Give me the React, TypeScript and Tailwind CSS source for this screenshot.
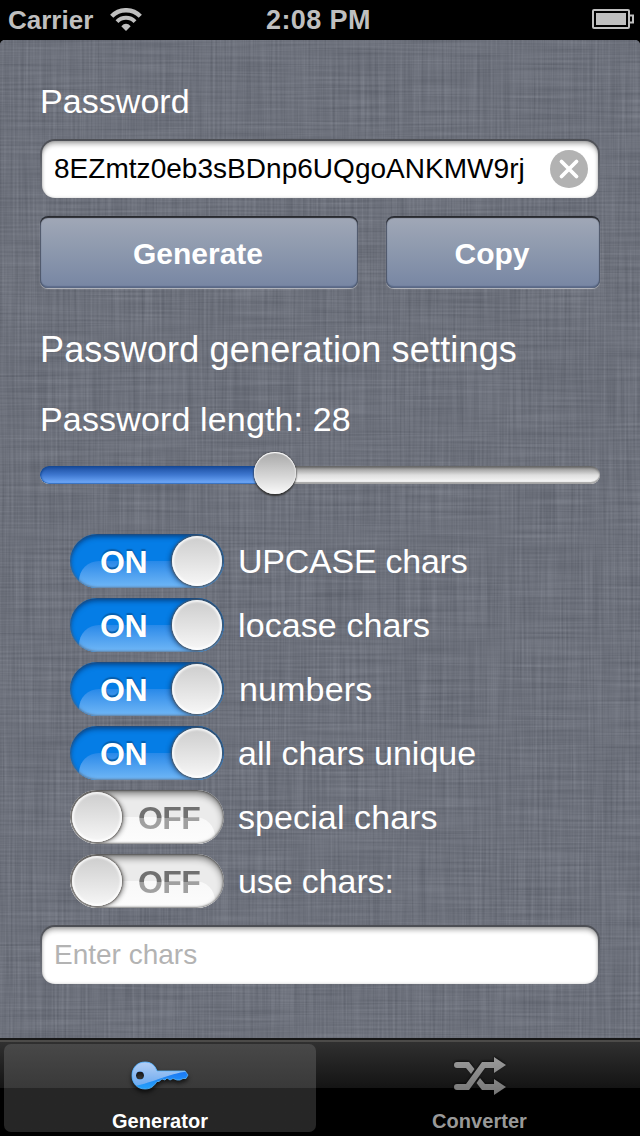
import React from "react";

function LinenTexture() {
  return (
    <svg className="absolute inset-0 h-full w-full" aria-hidden="true">
      <filter id="linen" x="0" y="0" width="100%" height="100%" colorInterpolationFilters="sRGB">
        <feTurbulence type="fractalNoise" baseFrequency="0.01 0.45" numOctaves="2" seed="4" />
        <feColorMatrix values="0 0 0 0.21 0.322  0 0 0 0.21 0.338  0 0 0 0.21 0.38  0 0 0 0 1" result="weft" />
        <feTurbulence type="fractalNoise" baseFrequency="0.45 0.01" numOctaves="2" seed="11" />
        <feColorMatrix values="0 0 0 0.21 0.322  0 0 0 0.21 0.338  0 0 0 0.21 0.38  0 0 0 0 1" result="warp" />
        <feComposite in="weft" in2="warp" operator="arithmetic" k2="0.5" k3="0.5" />
      </filter>
      <rect width="100%" height="100%" filter="url(#linen)" />
    </svg>
  );
}

function StatusBar() {
  return (
    <header className="grid h-10 shrink-0 grid-cols-3 items-center bg-black text-[26px] leading-10 font-bold text-[#bfbfbf]">
      <div className="flex items-center gap-[17px] pl-2">
        <span>Carrier</span>
        <svg width="32" height="24" viewBox="0 0 32 24" fill="none" stroke="#bfbfbf">
          <path d="M1.700 8.200A20 20 0 0 1 30.300 8.200" strokeWidth="4.4" />
          <path d="M7 13.700A12.500 12.500 0 0 1 25 13.700" strokeWidth="4" />
          <path d="M16 23L11.300 18.200Q16 13.500 20.700 18.200Z" fill="#bfbfbf" stroke="none" />
        </svg>
      </div>
      <div className="pr-[3px] text-center text-[27px] tracking-[0.4px] whitespace-nowrap">2:08 PM</div>
      <div className="flex justify-end pr-[6px] pb-[2px]">
        <svg width="42" height="20" viewBox="0 0 42 20" fill="none" stroke="#bfbfbf" strokeWidth="2">
          <rect x="1" y="1" width="36" height="18" rx="1" />
          <path d="M38 6.500h3v7h-3" />
          <rect x="4" y="4" width="30" height="12" fill="#bfbfbf" stroke="none" />
        </svg>
      </div>
    </header>
  );
}

function Field({ children }: { children: React.ReactNode }) {
  return (
    <div className="h-[60px] w-[560px] rounded-[15px] bg-linear-to-b from-[#4c4e54] via-[#686b73] to-[#6d717c]/0 p-[2px]">
      <div className="flex h-[57px] items-center justify-between rounded-[13px] bg-white pr-[10px] pb-px pl-[12px] shadow-[inset_0_4px_5px_-1px_rgba(0,0,0,0.32),inset_0_0_3px_rgba(0,0,0,0.22)]">
        {children}
      </div>
    </div>
  );
}

function ActionButton({ label, className }: { label: string; className: string }) {
  return (
    <button
      className={`${className} h-[72px] rounded-[8px] bg-linear-to-b from-[#a1a8b7] via-[#8c98ad] to-[#7786a3] pt-[3px] text-[30px] font-bold text-white shadow-[inset_0_2px_1px_#292b30,inset_1px_0_1px_#515b70,inset_-1px_0_1px_#515b70,inset_0_-2px_1px_#5d6c8b,0_1px_1px_#b7bac0]`}
    >
      <span className="pr-[2px]">{label}</span>
    </button>
  );
}

function Slider() {
  return (
    <div className="relative flex h-[46px] w-[560px] items-center pt-[2px]">
      <div className="flex h-[18px] w-full overflow-hidden rounded-full bg-linear-to-b from-[#858585] via-[#dedede] via-50% to-white shadow-[inset_0_2px_2px_rgba(0,0,0,0.25),inset_0_-2px_1px_#a5a5a5]">
        <div className="w-[235px] rounded-l-full bg-linear-to-b from-[#174b9e] via-[#3f78d0] via-50% to-[#76b0ff] shadow-[inset_1px_1px_2px_#164991,inset_0_-1px_1px_#3973c0]" />
      </div>
      <div className="absolute top-[1px] left-[214px] size-[42px] rounded-full bg-linear-to-b from-[#a8a8a8] to-[#fafafa] shadow-[inset_0_1px_1px_white,inset_0_0_2px_white,0_0_2px_#333,0_2px_2px_#333]" />
    </div>
  );
}

function Switch({ on }: { on: boolean }) {
  return (
    <div
      className={
        on
          ? "relative h-[54px] w-[154px] overflow-hidden rounded-full bg-[#057de6]"
          : "relative h-[54px] w-[154px] overflow-hidden rounded-full bg-[#ebebeb]"
      }
    >
      <div
        className={
          on
            ? "absolute top-[27px] left-[9px] h-[40px] w-[154px] rounded-[22px] bg-linear-to-b from-[#2789e9] to-[#8fcdfb]"
            : "absolute top-[27px] right-[9px] h-[40px] w-[154px] rounded-[22px] bg-linear-to-b from-[#f8f8f8] to-white"
        }
      />
      <div
        className={
          on
            ? "absolute inset-0 rounded-full shadow-[inset_0_3px_5px_rgba(0,35,85,0.6),inset_0_0_2px_1px_rgba(100,112,128,0.65)]"
            : "absolute inset-0 rounded-full shadow-[inset_0_4px_7px_rgba(0,0,0,0.48),inset_0_0_2px_1px_rgba(110,110,110,0.8)]"
        }
      />
      <span
        className={
          on
            ? "absolute top-[1px] left-[30px] text-[32px] leading-[54px] font-bold tracking-[-0.4px] text-white [text-shadow:0_-2px_1px_#075eac]"
            : "absolute top-[1px] left-[68px] bg-linear-to-b from-[#707070] from-50% to-[#a0a0a0] to-50% bg-clip-text text-[32px] leading-[54px] font-bold tracking-[-0.6px] text-transparent"
        }
      >
        {on ? "ON" : "OFF"}
      </span>
      <div
        className={
          on
            ? "absolute top-[2px] right-[2px] size-[50px] rounded-full bg-linear-to-b from-[#cdcdcd] to-[#f7f7f7] shadow-[inset_0_0_2px_2px_rgba(255,255,255,0.8),0_0_2px_1px_#50555c,-3px_1px_4px_rgba(0,45,95,0.45)]"
            : "absolute top-[2px] left-[2px] size-[50px] rounded-full bg-linear-to-b from-[#cdcdcd] to-[#f7f7f7] shadow-[inset_0_0_2px_2px_rgba(255,255,255,0.8),0_0_2px_1px_#65625f,3px_1px_4px_rgba(0,0,0,0.3)]"
        }
      />
    </div>
  );
}

const options = [
  { label: "UPCASE chars", on: true, spacing: "tracking-[-0.25px]" },
  { label: "locase chars", on: true, spacing: "tracking-[0.1px]" },
  { label: "numbers", on: true, spacing: "pl-[1px] tracking-[0.15px]" },
  { label: "all chars unique", on: true, spacing: "tracking-normal" },
  { label: "special chars", on: false, spacing: "tracking-[0.1px]" },
  { label: "use chars:", on: false, spacing: "tracking-[-0.1px]" },
];

function KeyIcon() {
  return (
    <svg width="60" height="34" viewBox="0 0 60 34" className="drop-shadow-[0_3px_2px_rgba(0,0,0,0.65)]">
      <defs>
        <linearGradient id="keyLow" x2="0" y2="1">
          <stop stopColor="#145cf0" />
          <stop offset="1" stopColor="#28aefb" />
        </linearGradient>
        <linearGradient id="keyHigh" x2="0" y2="1">
          <stop stopColor="#bad2f5" />
          <stop offset="1" stopColor="#68a8ef" />
        </linearGradient>
        <clipPath id="keyShape">
          <path clipRule="evenodd" d="M15 2C7 2 2 8 2 15.500S7 29 15 29C21 29 24 26 27 21.500H29L32 19L35 20L37 18L40 20L43 18.500L47 20H50L53 18.500H56L58 15L55 11H27C25 5 21 2 15 2ZM10 11.500a4 4 0 1 1 0 8a4 4 0 0 1 0-8Z" />
        </clipPath>
      </defs>
      <g clipPath="url(#keyShape)">
        <path fill="url(#keyLow)" d="M0 0h60v34H0z" />
        <path fill="url(#keyHigh)" d="M0 0h60v11C36 14 27 22 0 27z" />
      </g>
      <path d="M15 2C7 2 2 8 2 15.500S7 29 15 29C21 29 24 26 27 21.500H29L32 19L35 20L37 18L40 20L43 18.500L47 20H50L53 18.500H56L58 15L55 11H27C25 5 21 2 15 2Z" fill="none" stroke="#57b5fc" strokeWidth="0.8" />
    </svg>
  );
}

function ShuffleIcon() {
  return (
    <svg width="54" height="40" viewBox="0 0 54 40" className="drop-shadow-[0_-1px_1px_#0a0a0a]">
      <defs>
        <linearGradient id="shuffleInk" gradientUnits="userSpaceOnUse" x1="0" y1="0" x2="0" y2="40">
          <stop stopColor="#9b9b9b" />
          <stop offset="1" stopColor="#747474" />
        </linearGradient>
      </defs>
      <g fill="url(#shuffleInk)">
        <path d="M4 6H16L21.500 13L18 18L13 12H4A3 3 0 0 1 4 6Z" />
        <path d="M4 28H13L29 6H41V1L53 9L41 17V12H32L16 34H4A3 3 0 0 1 4 28Z" />
        <path d="M27 22L32 28H41V23L53 31L41 39V34H29L23.500 27Z" />
      </g>
    </svg>
  );
}

function TabBar() {
  return (
    <nav className="flex h-[98px] shrink-0 flex-col border-t-2 border-[#171717] bg-black">
      <div className="grid h-[96px] grid-cols-2 border-t-2 border-[#4c4b49] bg-linear-to-b from-[#303030] from-0% via-[#141414] via-[46px] to-black to-[46px] text-[20px] font-bold">
        <button className="m-[2px_4px_4px] flex flex-col items-center rounded-[7px] bg-linear-to-b from-[#484848] via-[#393939] via-[44px] to-[#262626] to-[44px] pt-[16px] text-white">
          <KeyIcon />
          <span className="mt-[16px] leading-[22px] tracking-[0.05px]">Generator</span>
        </button>
        <button className="flex flex-col items-center pt-[14px] pr-[1px] text-[#999999]">
          <ShuffleIcon />
          <span className="mt-[14px] leading-[22px] tracking-[0.05px]">Converter</span>
        </button>
      </div>
    </nav>
  );
}

export default function App() {
  return (
    <div className="flex h-[1136px] w-[640px] flex-col overflow-hidden bg-black font-['Liberation_Sans',Arial,sans-serif]">
      <StatusBar />
      <main className="relative h-[998px] shrink-0 overflow-hidden rounded-t-[5px] bg-[#6d717c]">
        <LinenTexture />
        <div className="relative flex flex-col px-10 text-[34px] leading-10 text-white">
          <h1 className="mt-[41px] tracking-[0.05px]">Password</h1>
          <div className="mt-[18px]">
            <Field>
              <span className="text-[28px] leading-10 tracking-[0.03px] whitespace-nowrap text-black">8EZmtz0eb3sBDnp6UQgoANKMW9rj</span>
              <svg width="38" height="38" viewBox="0 0 38 38">
                <circle cx="19" cy="19" r="19" fill="#b2b2b2" />
                <path d="M11.500 11.500L26.500 26.500M26.500 11.500L11.500 26.500" stroke="white" strokeWidth="3.800" strokeLinecap="round" />
              </svg>
            </Field>
          </div>
          <div className="mt-[17px] flex gap-7">
            <ActionButton label="Generate" className="w-[318px]" />
            <ActionButton label="Copy" className="w-[214px]" />
          </div>
          <h2 className="mt-[42px] text-[36px] tracking-[0.17px]">Password generation settings</h2>
          <div className="mt-[29px] tracking-[0.15px]">Password length: 28</div>
          <div className="mt-[12px]">
            <Slider />
          </div>
          <div className="mt-[37px] ml-[30px] flex flex-col gap-[10px]">
            {options.map((option) => (
              <div key={option.label} className="flex items-center gap-[14px]">
                <Switch on={option.on} />
                <span className={option.spacing}>{option.label}</span>
              </div>
            ))}
          </div>
          <div className="mt-[17px]">
            <Field>
              <span className="text-[28px] leading-10 text-[#b3b3b3]">Enter chars</span>
            </Field>
          </div>
        </div>
      </main>
      <TabBar />
    </div>
  );
}
